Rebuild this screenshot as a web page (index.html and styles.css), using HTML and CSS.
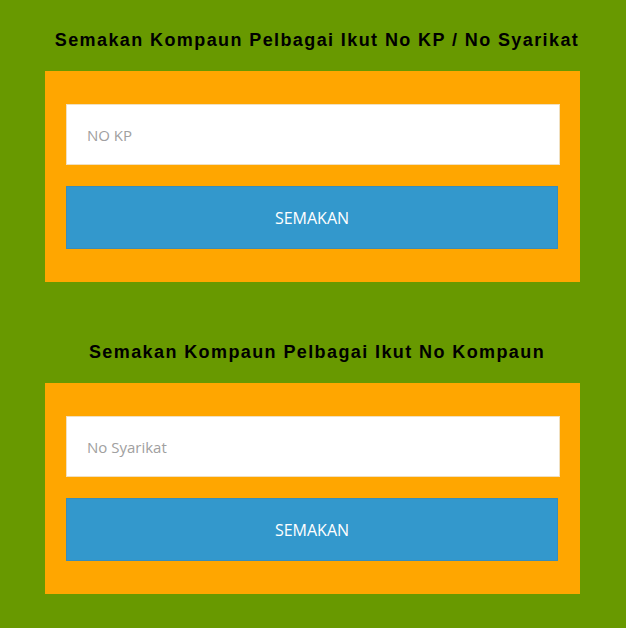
FILE: index.html
```html
<!DOCTYPE html>
<html>
<head>
<meta charset="utf-8">
<link rel="stylesheet" href="styles.css">
</head>
<body>
<div class="page">
  <section class="section first">
    <h2 class="title">Semakan Kompaun Pelbagai Ikut No KP / No Syarikat</h2>
    <form class="box">
      <input class="field" type="text" placeholder="NO KP">
      <button class="btn" type="button">SEMAKAN</button>
    </form>
  </section>
  <section class="section second">
    <h2 class="title">Semakan Kompaun Pelbagai Ikut No Kompaun</h2>
    <form class="box">
      <input class="field" type="text" placeholder="No Syarikat">
      <button class="btn" type="button">SEMAKAN</button>
    </form>
  </section>
</div>
</body>
</html>
```
FILE: styles.css
```css
html, body {
  margin: 0;
  padding: 0;
  background: #689900;
}
.page {
  width: 626px;
  height: 628px;
  overflow: hidden;
}
.section {
  display: flex;
  flex-direction: column;
}
.section.first {
  padding-top: 30px;
}
.section.second {
  padding-top: 60px;
}
.title {
  margin: 0 0 21px 0;
  height: 20px;
  line-height: 20px;
  font-family: "Liberation Sans", Arial, sans-serif;
  font-weight: bold;
  font-size: 18px;
  letter-spacing: 1.4px;
  color: #000;
  text-align: center;
  padding-left: 8px;
}
.box {
  margin: 0 0 0 45px;
  width: 535px;
  box-sizing: border-box;
  background: #ffa600;
  padding: 33px 20px 33px 21px;
  display: flex;
  flex-direction: column;
  gap: 21px;
}
.field {
  display: block;
  box-sizing: border-box;
  width: 494px;
  height: 61px;
  margin: 0;
  padding: 0 0 0 20px;
  border: 1px solid #f0e0c0;
  background: #fff;
  font-family: "Open Sans", sans-serif;
  font-size: 15px;
  color: #555;
  outline: none;
}
.field::placeholder {
  color: #a0a0a0;
}
.btn {
  display: block;
  box-sizing: border-box;
  width: 492px;
  height: 63px;
  margin: 0;
  padding: 0;
  border: 1px solid #3a8db8;
  background: #3398cc;
  color: #fff;
  font-family: "Open Sans", sans-serif;
  font-size: 16px;
  cursor: pointer;
}
```
